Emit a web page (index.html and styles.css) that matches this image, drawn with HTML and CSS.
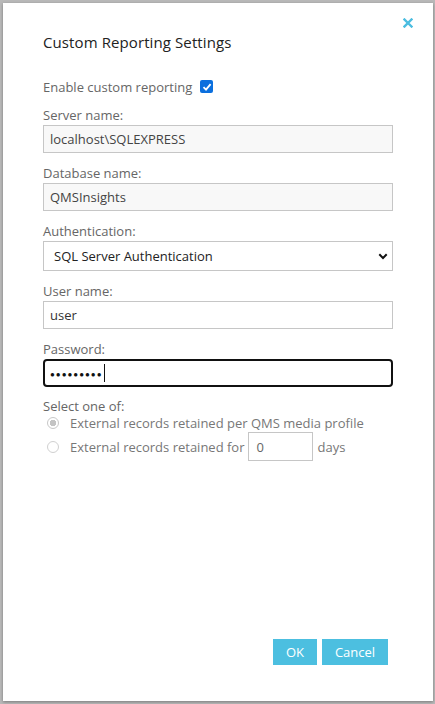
FILE: index.html
```html
<!DOCTYPE html>
<html>
<head>
<meta charset="utf-8">
<link rel="stylesheet" href="styles.css">
</head>
<body>
<div class="dialog">
  <button class="close" aria-label="Close">
    <svg width="10" height="10" viewBox="0 0 10 10"><path d="M1.5 1.5 L8.5 8.5 M8.5 1.5 L1.5 8.5" stroke="#4bbde0" stroke-width="2.4" stroke-linecap="square"/></svg>
  </button>
  <h1 class="title">Custom Reporting Settings</h1>
  <div class="enable-row">
    <span>Enable custom reporting</span>
    <span class="checkbox"><svg width="10" height="10" viewBox="0 0 10 10"><path d="M1.5 5.2 L4 7.6 L8.6 2.2" fill="none" stroke="#fff" stroke-width="1.8"/></svg></span>
  </div>
  <div class="field">
    <label class="label">Server name:</label>
    <div class="input readonly">localhost\SQLEXPRESS</div>
  </div>
  <div class="field">
    <label class="label">Database name:</label>
    <div class="input readonly">QMSInsights</div>
  </div>
  <div class="field">
    <label class="label">Authentication:</label>
    <div class="select">
      <span>SQL Server Authentication</span>
      <svg width="10" height="7" viewBox="0 0 10 7"><path d="M1.3 1.3 L5 5 L8.7 1.3" fill="none" stroke="#111" stroke-width="2"/></svg>
    </div>
  </div>
  <div class="field">
    <label class="label">User name:</label>
    <div class="input">user</div>
  </div>
  <div class="field">
    <label class="label">Password:</label>
    <div class="input focused"><span class="dots">●●●●●●●●●</span><span class="caret"></span></div>
  </div>
  <div class="group">
    <div class="label">Select one of:</div>
    <div class="radio-row first">
      <span class="radio checked"></span>
      <span>External records retained per QMS media profile</span>
    </div>
    <div class="radio-row second">
      <span class="radio"></span>
      <span>External records retained for</span>
      <span class="days-input">0</span>
      <span>days</span>
    </div>
  </div>
  <div class="footer">
    <button class="btn ok">OK</button>
    <button class="btn cancel">Cancel</button>
  </div>
</div>
</body>
</html>
```
FILE: styles.css
```css
html, body {
  margin: 0;
  padding: 0;
  height: 100%;
}
body {
  background: #b9b9b9;
  padding: 3px 2px 3px 3px;
  box-sizing: border-box;
  font-family: "Open Sans", "Noto Sans", sans-serif;
}
.dialog {
  position: relative;
  box-sizing: border-box;
  height: 698px;
  background: #fff;
  box-shadow: 0 1px 3px rgba(0,0,0,0.35);
  padding: 29px 40px 36px 40px;
  display: flex;
  flex-direction: column;
}
.close {
  position: absolute;
  top: 15px;
  right: 20px;
  border: 0;
  background: none;
  padding: 0;
  width: 10px;
  height: 10px;
  line-height: 0;
}
.title {
  margin: 0;
  font-size: 15px;
  font-weight: normal;
  line-height: 20px;
  color: #222;
  letter-spacing: 0.1px;
}
.enable-row {
  margin-top: 26px;
  display: flex;
  align-items: center;
  gap: 8px;
  font-size: 13px;
  line-height: 18px;
  color: #666;
}
.checkbox {
  width: 13px;
  height: 13px;
  border-radius: 2px;
  background: #0b6fde;
  display: flex;
  align-items: center;
  justify-content: center;
  margin-top: -1px;
}
.field {
  margin-top: 10px;
  display: flex;
  flex-direction: column;
}
.field + .field {
  margin-top: 11px;
}
.label {
  font-size: 13px;
  line-height: 18px;
  color: #666;
  margin-bottom: 1px;
}
.input {
  box-sizing: border-box;
  height: 28px;
  border: 1px solid #c6c6c6;
  background: #fff;
  padding: 0 6px;
  display: flex;
  align-items: center;
  font-size: 13px;
  color: #333;
}
.input.readonly {
  background: #f8f8f8;
  color: #444;
}
.input.focused {
  border: 2px solid #111;
  border-radius: 4px;
  padding: 0 5px;
}
.dots {
  font-size: 8px;
  letter-spacing: 1px;
  color: #111;
}
.caret {
  display: inline-block;
  width: 1px;
  height: 18px;
  background: #111;
  margin-left: 1px;
}
.select {
  box-sizing: border-box;
  height: 30px;
  border: 1px solid #c6c6c6;
  background: #fff;
  padding: 0 4px 0 10px;
  display: flex;
  align-items: center;
  justify-content: space-between;
  font-size: 13px;
  color: #222;
}
.group {
  margin-top: 10px;
}
.group .label {
  margin-bottom: 0;
}
.radio-row {
  display: flex;
  align-items: center;
  font-size: 13px;
  line-height: 18px;
  color: #777;
  padding-left: 4px;
}
.radio-row.first {
  margin-top: -1px;
}
.radio {
  box-sizing: border-box;
  width: 12px;
  height: 12px;
  border-radius: 50%;
  border: 1px solid #d0d0d0;
  background: #fff;
  margin-right: 11px;
  flex: none;
}
.radio.checked {
  border: 1px solid #c8c8c8;
  background: radial-gradient(circle, #c4c4c4 0 3px, #fff 3.5px);
}
.days-input {
  box-sizing: border-box;
  width: 65px;
  height: 29px;
  border: 1px solid #c6c6c6;
  margin: 0 5px 0 3px;
  padding: 0 8px;
  display: flex;
  align-items: center;
  color: #666;
}
.footer {
  margin-top: auto;
  display: flex;
  justify-content: flex-end;
  gap: 5px;
  padding-right: 5px;
}
.btn {
  border: 0;
  height: 26px;
  background: #4cbfe0;
  color: #fff;
  font-family: inherit;
  font-size: 13px;
  padding: 0;
}
.btn.ok {
  width: 44px;
}
.btn.cancel {
  width: 66px;
}
```
